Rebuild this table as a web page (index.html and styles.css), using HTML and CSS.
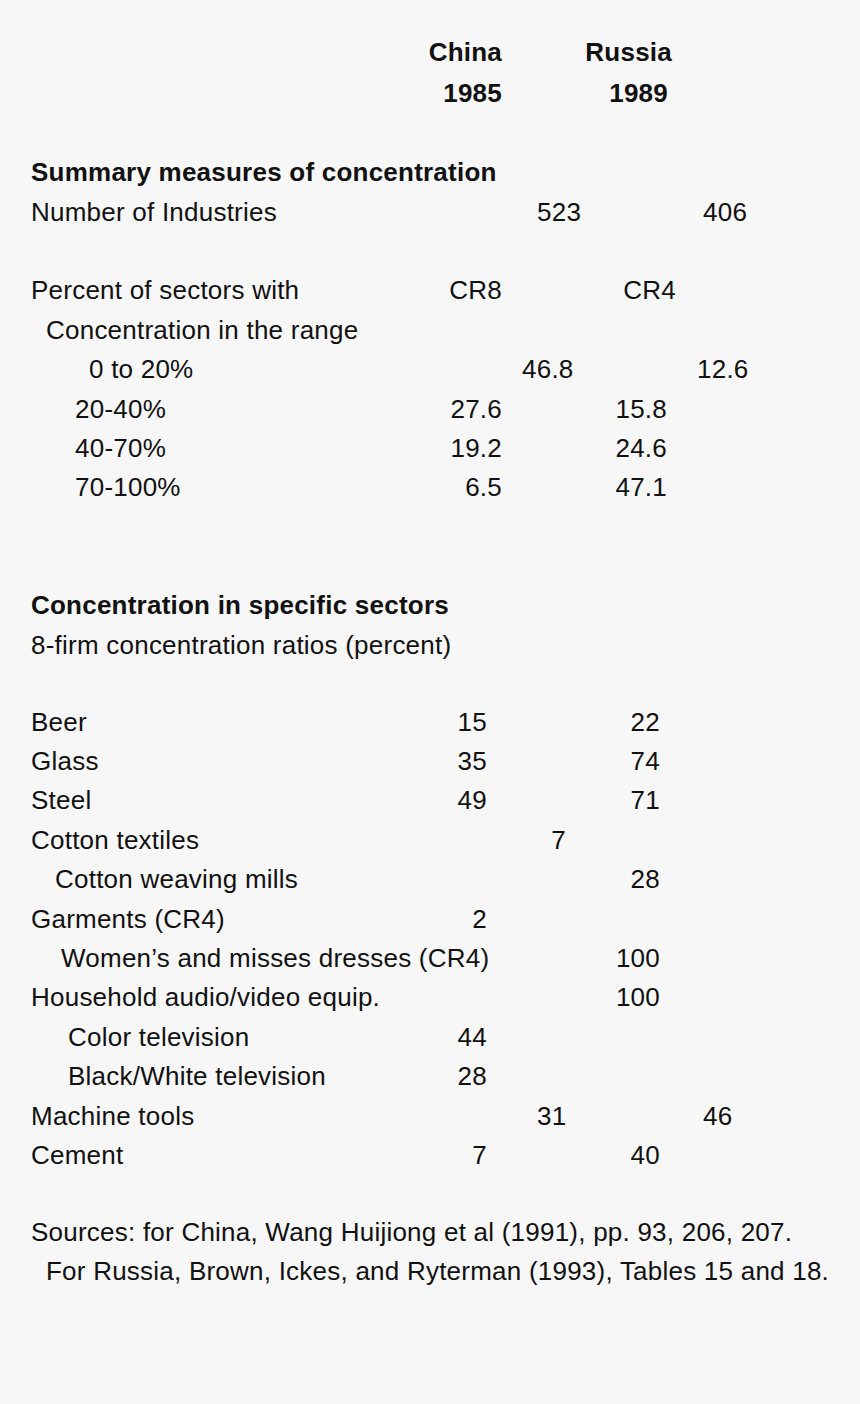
FILE: index.html
```html
<!DOCTYPE html>
<html lang="en">
<head>
<meta charset="utf-8">
<title>Concentration table</title>
<link rel="stylesheet" href="styles.css">
</head>
<body>
<div class="sheet">
  <div class="row head"><span class="lab"></span><span class="c1">China</span><span class="c2"></span><span class="c3 r4">Russia</span></div>
  <div class="row head second"><span class="lab"></span><span class="c1">1985</span><span class="c2"></span><span class="c3 r8">1989</span></div>

  <div class="row gap1 bold"><span class="lab">Summary measures of concentration</span></div>
  <div class="row"><span class="lab">Number of Industries</span><span class="c1"></span><span class="c2 l35">523</span><span class="c3"></span><span class="c4 l27">406</span></div>

  <div class="row gap1"><span class="lab">Percent of sectors with</span><span class="c1">CR8</span><span class="c2"></span><span class="c3">CR4</span></div>
  <div class="row"><span class="lab i15">Concentration in the range</span></div>
  <div class="row"><span class="lab i58">0 to 20%</span><span class="c1"></span><span class="c2 l20">46.8</span><span class="c3"></span><span class="c4 l21">12.6</span></div>
  <div class="row"><span class="lab i44">20-40%</span><span class="c1">27.6</span><span class="c2"></span><span class="c3 r9">15.8</span></div>
  <div class="row"><span class="lab i44">40-70%</span><span class="c1">19.2</span><span class="c2"></span><span class="c3 r9">24.6</span></div>
  <div class="row"><span class="lab i44">70-100%</span><span class="c1">6.5</span><span class="c2"></span><span class="c3 r9">47.1</span></div>

  <div class="row gap2 bold"><span class="lab">Concentration in specific sectors</span></div>
  <div class="row"><span class="lab">8-firm concentration ratios (percent)</span></div>

  <div class="row gap1b"><span class="lab">Beer</span><span class="c1 r15">15</span><span class="c2"></span><span class="c3 r16">22</span></div>
  <div class="row"><span class="lab">Glass</span><span class="c1 r15">35</span><span class="c2"></span><span class="c3 r16">74</span></div>
  <div class="row"><span class="lab">Steel</span><span class="c1 r15">49</span><span class="c2"></span><span class="c3 r16">71</span></div>
  <div class="row"><span class="lab">Cotton textiles</span><span class="c1"></span><span class="c2 end r14">7</span></div>
  <div class="row"><span class="lab i24">Cotton weaving mills</span><span class="c1"></span><span class="c2"></span><span class="c3 r16">28</span></div>
  <div class="row"><span class="lab">Garments (CR4)</span><span class="c1 r15">2</span></div>
  <div class="row"><span class="lab i30">Women’s and misses dresses (CR4)</span><span class="c1"></span><span class="c2"></span><span class="c3 r16">100</span></div>
  <div class="row"><span class="lab">Household audio/video equip.</span><span class="c1"></span><span class="c2"></span><span class="c3 r16">100</span></div>
  <div class="row"><span class="lab i37">Color television</span><span class="c1 r15">44</span></div>
  <div class="row"><span class="lab i37">Black/White television</span><span class="c1 r15">28</span></div>
  <div class="row"><span class="lab">Machine tools</span><span class="c1"></span><span class="c2 l35">31</span><span class="c3"></span><span class="c4 l27">46</span></div>
  <div class="row"><span class="lab">Cement</span><span class="c1 r15">7</span><span class="c2"></span><span class="c3 r16">40</span></div>

  <p class="note first">Sources: for China, Wang Huijiong et al (1991), pp. 93, 206, 207.</p>
  <p class="note i15">For Russia, Brown, Ickes, and Ryterman (1993), Tables 15 and 18.</p>
</div>
</body>
</html>
```

FILE: styles.css
```css
html, body {
  margin: 0;
  padding: 0;
  background: #f7f7f7;
}

body {
  font-family: "Liberation Sans", Arial, Helvetica, sans-serif;
  font-size: 26px;
  letter-spacing: 0.23px;
  color: #111;
}

.sheet {
  width: 860px;
  height: 1404px;
  box-sizing: border-box;
  padding: 33px 0 0 31px;
}

.row {
  display: grid;
  grid-template-columns: 409px 62px 78px 96px 70px;
  height: 39.4px;
  line-height: 39.4px;
  white-space: nowrap;
}

.row span {
  display: flex;
}

.head,
.bold {
  font-weight: bold;
}

.second { margin-top: 2px; }

.c1,
.c3 {
  justify-content: flex-end;
}

.c2,
.c4 {
  justify-content: flex-start;
}

.row .end {
  justify-content: flex-end;
}

.gap1 { margin-top: 39.4px; }
.gap1b { margin-top: 37.4px; }
.gap2 { margin-top: 78.8px; }

/* label indents */
.i15 { padding-left: 15px; }
.i24 { padding-left: 24px; }
.i30 { padding-left: 30px; }
.i37 { padding-left: 37px; }
.i44 { padding-left: 44px; }
.i58 { padding-left: 58px; }

/* right-aligned offsets */
.r4 { padding-right: 4px; }
.r8 { padding-right: 8px; }
.r9 { padding-right: 9px; }
.r14 { padding-right: 14px; }
.r15 { padding-right: 15px; }
.r16 { padding-right: 16px; }

/* left-aligned offsets */
.l20 { padding-left: 20px; }
.l21 { padding-left: 21px; }
.l27 { padding-left: 27px; }
.l35 { padding-left: 35px; }

.note {
  margin: 0;
  height: 39.4px;
  line-height: 39.4px;
  white-space: nowrap;
}

.note.first { margin-top: 37.4px; }
```
